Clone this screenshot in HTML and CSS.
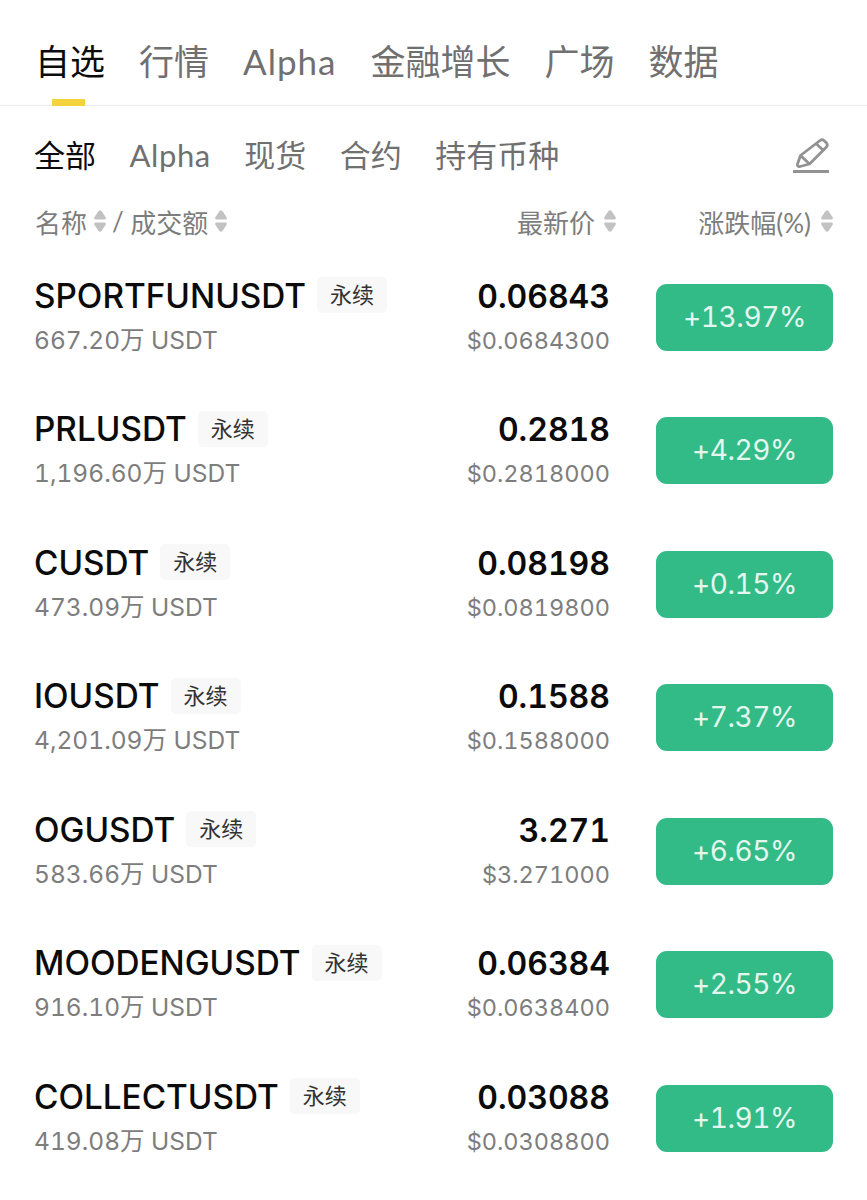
FILE: index.html
```html
<!DOCTYPE html>
<html lang="en">
<head>
    <meta charset="UTF-8">
    <meta name="viewport" content="width=device-width, initial-scale=1.0">
    <title>自选</title>
    <link rel="stylesheet" href="styles.css">
</head>
<body>
    <svg class="sprite" width="0" height="0">
        <symbol id="sort" viewBox="0 0 12 24">
            <path d="M4.500 2 Q6 .5 7.500 2 L11.500 8 Q12.500 10.500 10.500 10.500 H1.500 Q-.5 10.500 .5 8 Z"/>
            <path d="M4.500 22 Q6 23.500 7.500 22 L11.500 16 Q12.500 13.500 10.500 13.500 H1.500 Q-.5 13.500 .5 16 Z"/>
        </symbol>
    </svg>

    <header class="tabs">
        <a class="tab active">自选</a>
        <a class="tab">行情</a>
        <a class="tab latin">Alpha</a>
        <a class="tab">金融增长</a>
        <a class="tab">广场</a>
        <a class="tab">数据</a>
    </header>

    <nav class="subtabs">
        <a class="subtab active">全部</a>
        <a class="subtab latin">Alpha</a>
        <a class="subtab">现货</a>
        <a class="subtab">合约</a>
        <a class="subtab">持有币种</a>
        <svg class="edit" width="38" height="36" viewBox="0 0 38 36" fill="none" stroke="#929292">
            <path stroke-width="2.800" stroke-linejoin="round" d="M28 2.500 Q30 1 32 2.500 L34.500 5 Q36 7 34.500 9 L17.500 26 L8 28.500 Q5 29 5.500 26 L8.500 17.500 Z"/>
            <path stroke-width="2.800" d="M24.500 6 L31.500 12.500 M8.500 17.500 L17.500 26"/>
            <path stroke-width="3" d="M1 33.500 H37"/>
        </svg>
    </nav>

    <div class="columns">
        <div class="col-name">
            <span>名称</span><svg class="sort"><use href="#sort"/></svg>
            <span>/</span>
            <span>成交额</span><svg class="sort"><use href="#sort"/></svg>
        </div>
        <div class="col-price"><span>最新价</span><svg class="sort"><use href="#sort"/></svg></div>
        <div class="col-change"><span>涨跌幅(%)</span><svg class="sort"><use href="#sort"/></svg></div>
    </div>

    <main class="list">
        <div class="row">
            <div class="name"><span class="symbol">SPORTFUNUSDT</span><span class="tag">永续</span></div>
            <div class="price">0.06843</div>
            <div class="change">+13.97%</div>
            <div class="volume">667.20万 USDT</div>
            <div class="fiat">$0.0684300</div>
        </div>
        <div class="row">
            <div class="name"><span class="symbol">PRLUSDT</span><span class="tag">永续</span></div>
            <div class="price">0.2818</div>
            <div class="change">+4.29%</div>
            <div class="volume">1,196.60万 USDT</div>
            <div class="fiat">$0.2818000</div>
        </div>
        <div class="row">
            <div class="name"><span class="symbol">CUSDT</span><span class="tag">永续</span></div>
            <div class="price">0.08198</div>
            <div class="change">+0.15%</div>
            <div class="volume">473.09万 USDT</div>
            <div class="fiat">$0.0819800</div>
        </div>
        <div class="row">
            <div class="name"><span class="symbol">IOUSDT</span><span class="tag">永续</span></div>
            <div class="price">0.1588</div>
            <div class="change">+7.37%</div>
            <div class="volume">4,201.09万 USDT</div>
            <div class="fiat">$0.1588000</div>
        </div>
        <div class="row">
            <div class="name"><span class="symbol">OGUSDT</span><span class="tag">永续</span></div>
            <div class="price">3.271</div>
            <div class="change">+6.65%</div>
            <div class="volume">583.66万 USDT</div>
            <div class="fiat">$3.271000</div>
        </div>
        <div class="row">
            <div class="name"><span class="symbol">MOODENGUSDT</span><span class="tag">永续</span></div>
            <div class="price">0.06384</div>
            <div class="change">+2.55%</div>
            <div class="volume">916.10万 USDT</div>
            <div class="fiat">$0.0638400</div>
        </div>
        <div class="row">
            <div class="name"><span class="symbol">COLLECTUSDT</span><span class="tag">永续</span></div>
            <div class="price">0.03088</div>
            <div class="change">+1.91%</div>
            <div class="volume">419.08万 USDT</div>
            <div class="fiat">$0.0308800</div>
        </div>
    </main>
</body>
</html>
```

FILE: styles.css
```css
body, html {
    margin: 0;
    padding: 0;
    background-color: #fff;
    font-family: Lato, "Noto Sans CJK SC", sans-serif;
}

.sprite {
    display: none;
}

.tabs {
    height: 105px;
    padding-left: 35px;
    display: flex;
    gap: 34px;
    border-bottom: 1px solid #ececec;
}

.tab {
    position: relative;
    font-size: 35px;
    line-height: 40px;
    margin-top: 41px;
    color: #707070;
    height: 64px;
}

.latin {
    letter-spacing: .6px;
}

.tab.latin {
    letter-spacing: 1px;
}

.tab.active {
    color: #0b0b0b;
}

/* yellow marker sits on the divider */
.tab.active::after {
    content: "";
    position: absolute;
    left: 17px;
    bottom: -1px;
    width: 33px;
    height: 7px;
    background-color: #f5d33f;
}

.subtabs {
    display: flex;
    align-items: center;
    gap: 33.5px;
    padding: 27px 37px 0 34px;
    height: 44px;
}

.subtab {
    font-size: 31px;
    line-height: 44px;
    color: #707070;
}

.subtab.active {
    color: #0b0b0b;
}

.edit {
    margin-left: auto;
    margin-top: 2px;
}

.columns {
    display: flex;
    align-items: center;
    height: 30px;
    margin-top: 29px;
    padding: 0 34px 0 35px;
    font-size: 26px;
    color: #7d7d7d;
}

.columns > div {
    display: flex;
    align-items: center;
    gap: 6.5px;
    white-space: nowrap;
}

.col-name {
    width: 482px;
}

.columns .col-price {
    width: 180px;
    gap: 9px;
}

.columns .col-change {
    margin-left: auto;
    gap: 10px;
}

.sort {
    width: 12px;
    height: 24px;
    fill: #c2c2c2;
}

.list {
    margin-top: 15px;
    padding: 0 34px;
}

.row {
    display: grid;
    grid-template-columns: minmax(0, 1fr) 240px 177px;
    grid-template-rows: 44px 44px;
    column-gap: 46px;
    height: 133.5px;
    box-sizing: border-box;
    padding-top: 22px;
    align-items: center;
    font-family: Inter, "Noto Sans CJK SC", sans-serif;
    font-variant-numeric: tabular-nums;
}

.name {
    display: flex;
    align-items: center;
    gap: 11px;
    white-space: nowrap;
}

.symbol {
    margin-top: 1px;
    font-size: 33.3px;
    font-weight: 500;
    color: #0b0b0b;
}

.tag {
    padding: 0 13px;
    height: 36px;
    line-height: 36px;
    font-size: 22px;
    color: #333;
    background-color: #f8f8f8;
    border-radius: 5px;
}

.price {
    margin-top: 2px;
    text-align: right;
    font-size: 32px;
    font-weight: 600;
    color: #0b0b0b;
}

.change {
    grid-row: 1 / span 2;
    grid-column: 3;
    height: 67px;
    line-height: 67px;
    text-align: center;
    font-size: 28px;
    letter-spacing: -.4px;
    color: #e4f7ee;
    background-color: #32bb87;
    border-radius: 11px;
}

.volume {
    grid-row: 2;
    grid-column: 1;
    margin-top: -2px;
    font-size: 24.5px;
    color: #7d7d7d;
}

.fiat {
    grid-row: 2;
    grid-column: 2;
    margin-top: 2px;
    text-align: right;
    font-size: 23.5px;
    color: #7d7d7d;
}
```
